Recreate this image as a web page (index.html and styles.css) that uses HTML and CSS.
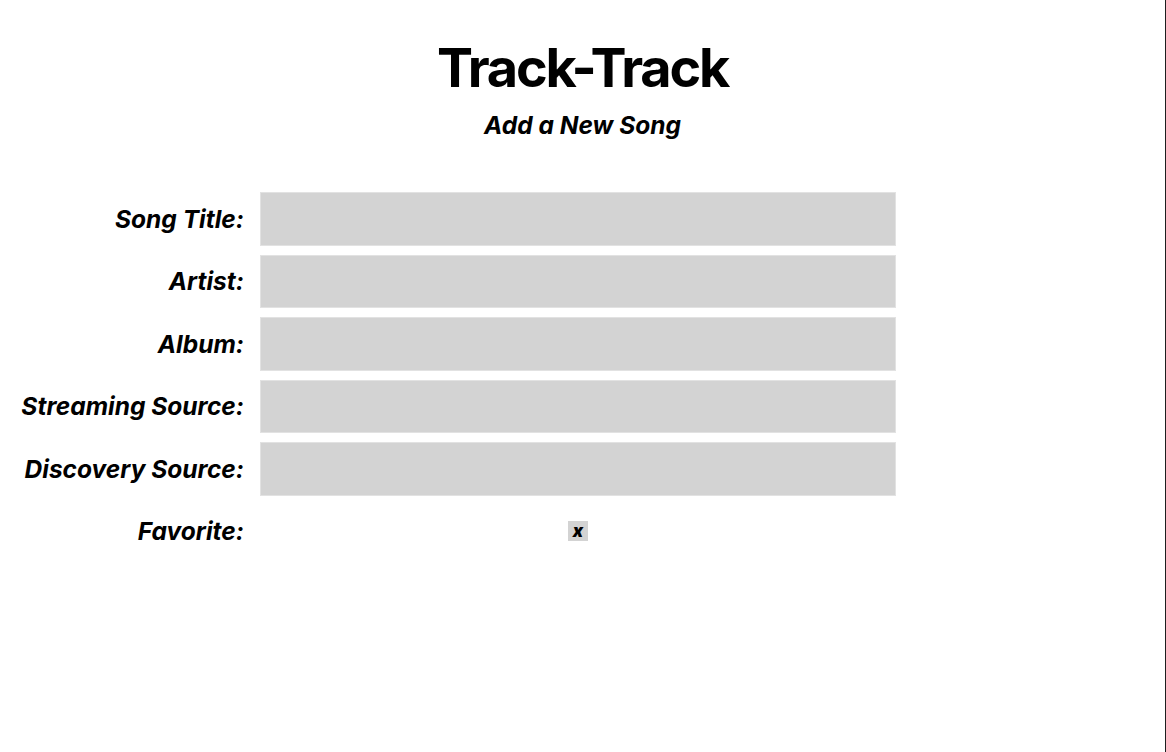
FILE: index.html
```html
<!DOCTYPE html>
<html lang="en">
<head>
<meta charset="utf-8">
<title>Track-Track</title>
<link rel="stylesheet" href="styles.css">
</head>
<body>
<div class="page">
  <header class="header">
    <h1 class="title">Track-Track</h1>
    <h2 class="subtitle">Add a New Song</h2>
  </header>
  <form class="song-form">
    <label class="field-label" for="title">Song Title:</label>
    <input class="field-input" id="title" type="text">
    <label class="field-label" for="artist">Artist:</label>
    <input class="field-input" id="artist" type="text">
    <label class="field-label" for="album">Album:</label>
    <input class="field-input" id="album" type="text">
    <label class="field-label" for="stream">Streaming Source:</label>
    <input class="field-input" id="stream" type="text">
    <label class="field-label" for="disc">Discovery Source:</label>
    <input class="field-input" id="disc" type="text">
    <span class="field-label">Favorite:</span>
    <div class="fav-cell"><span class="fav-box">x</span></div>
  </form>
</div>
</body>
</html>
```

FILE: styles.css
```css
html, body {
  margin: 0;
  padding: 0;
  background: #fff;
}
body {
  font-family: "Inter", "Liberation Sans", sans-serif;
  color: #000;
}
.page {
  min-height: 100vh;
  box-sizing: border-box;
  border-right: 1px solid #1e1e1e;
  padding-top: 36px;
}
.header {
  text-align: center;
}
.title {
  margin: 0;
  font-size: 54px;
  font-weight: 700;
  line-height: 64px;
  letter-spacing: -2.2px;
}
.subtitle {
  margin: 10px 0 0;
  font-size: 24.5px;
  font-weight: 700;
  font-style: italic;
  line-height: 30px;
}
.song-form {
  display: grid;
  grid-template-columns: 244px 636px;
  column-gap: 16px;
  row-gap: 9px;
  margin-top: 52px;
  align-items: center;
}
.field-label {
  text-align: right;
  font-size: 24.5px;
  font-weight: 700;
  font-style: italic;
}
.field-input {
  height: 53.5px;
  box-sizing: border-box;
  border: 1px solid #e2e2e2;
  background: #d3d3d3;
  margin: 0;
  padding: 0 8px;
  font-family: inherit;
  font-size: 20px;
}
.fav-cell {
  display: flex;
  justify-content: center;
  align-items: center;
  height: 53.5px;
}
.fav-box {
  width: 20px;
  height: 20px;
  background: #d3d3d3;
  display: flex;
  align-items: center;
  justify-content: center;
  font-size: 17px;
  font-weight: 900;
  font-style: italic;
  line-height: 1;
}
```
